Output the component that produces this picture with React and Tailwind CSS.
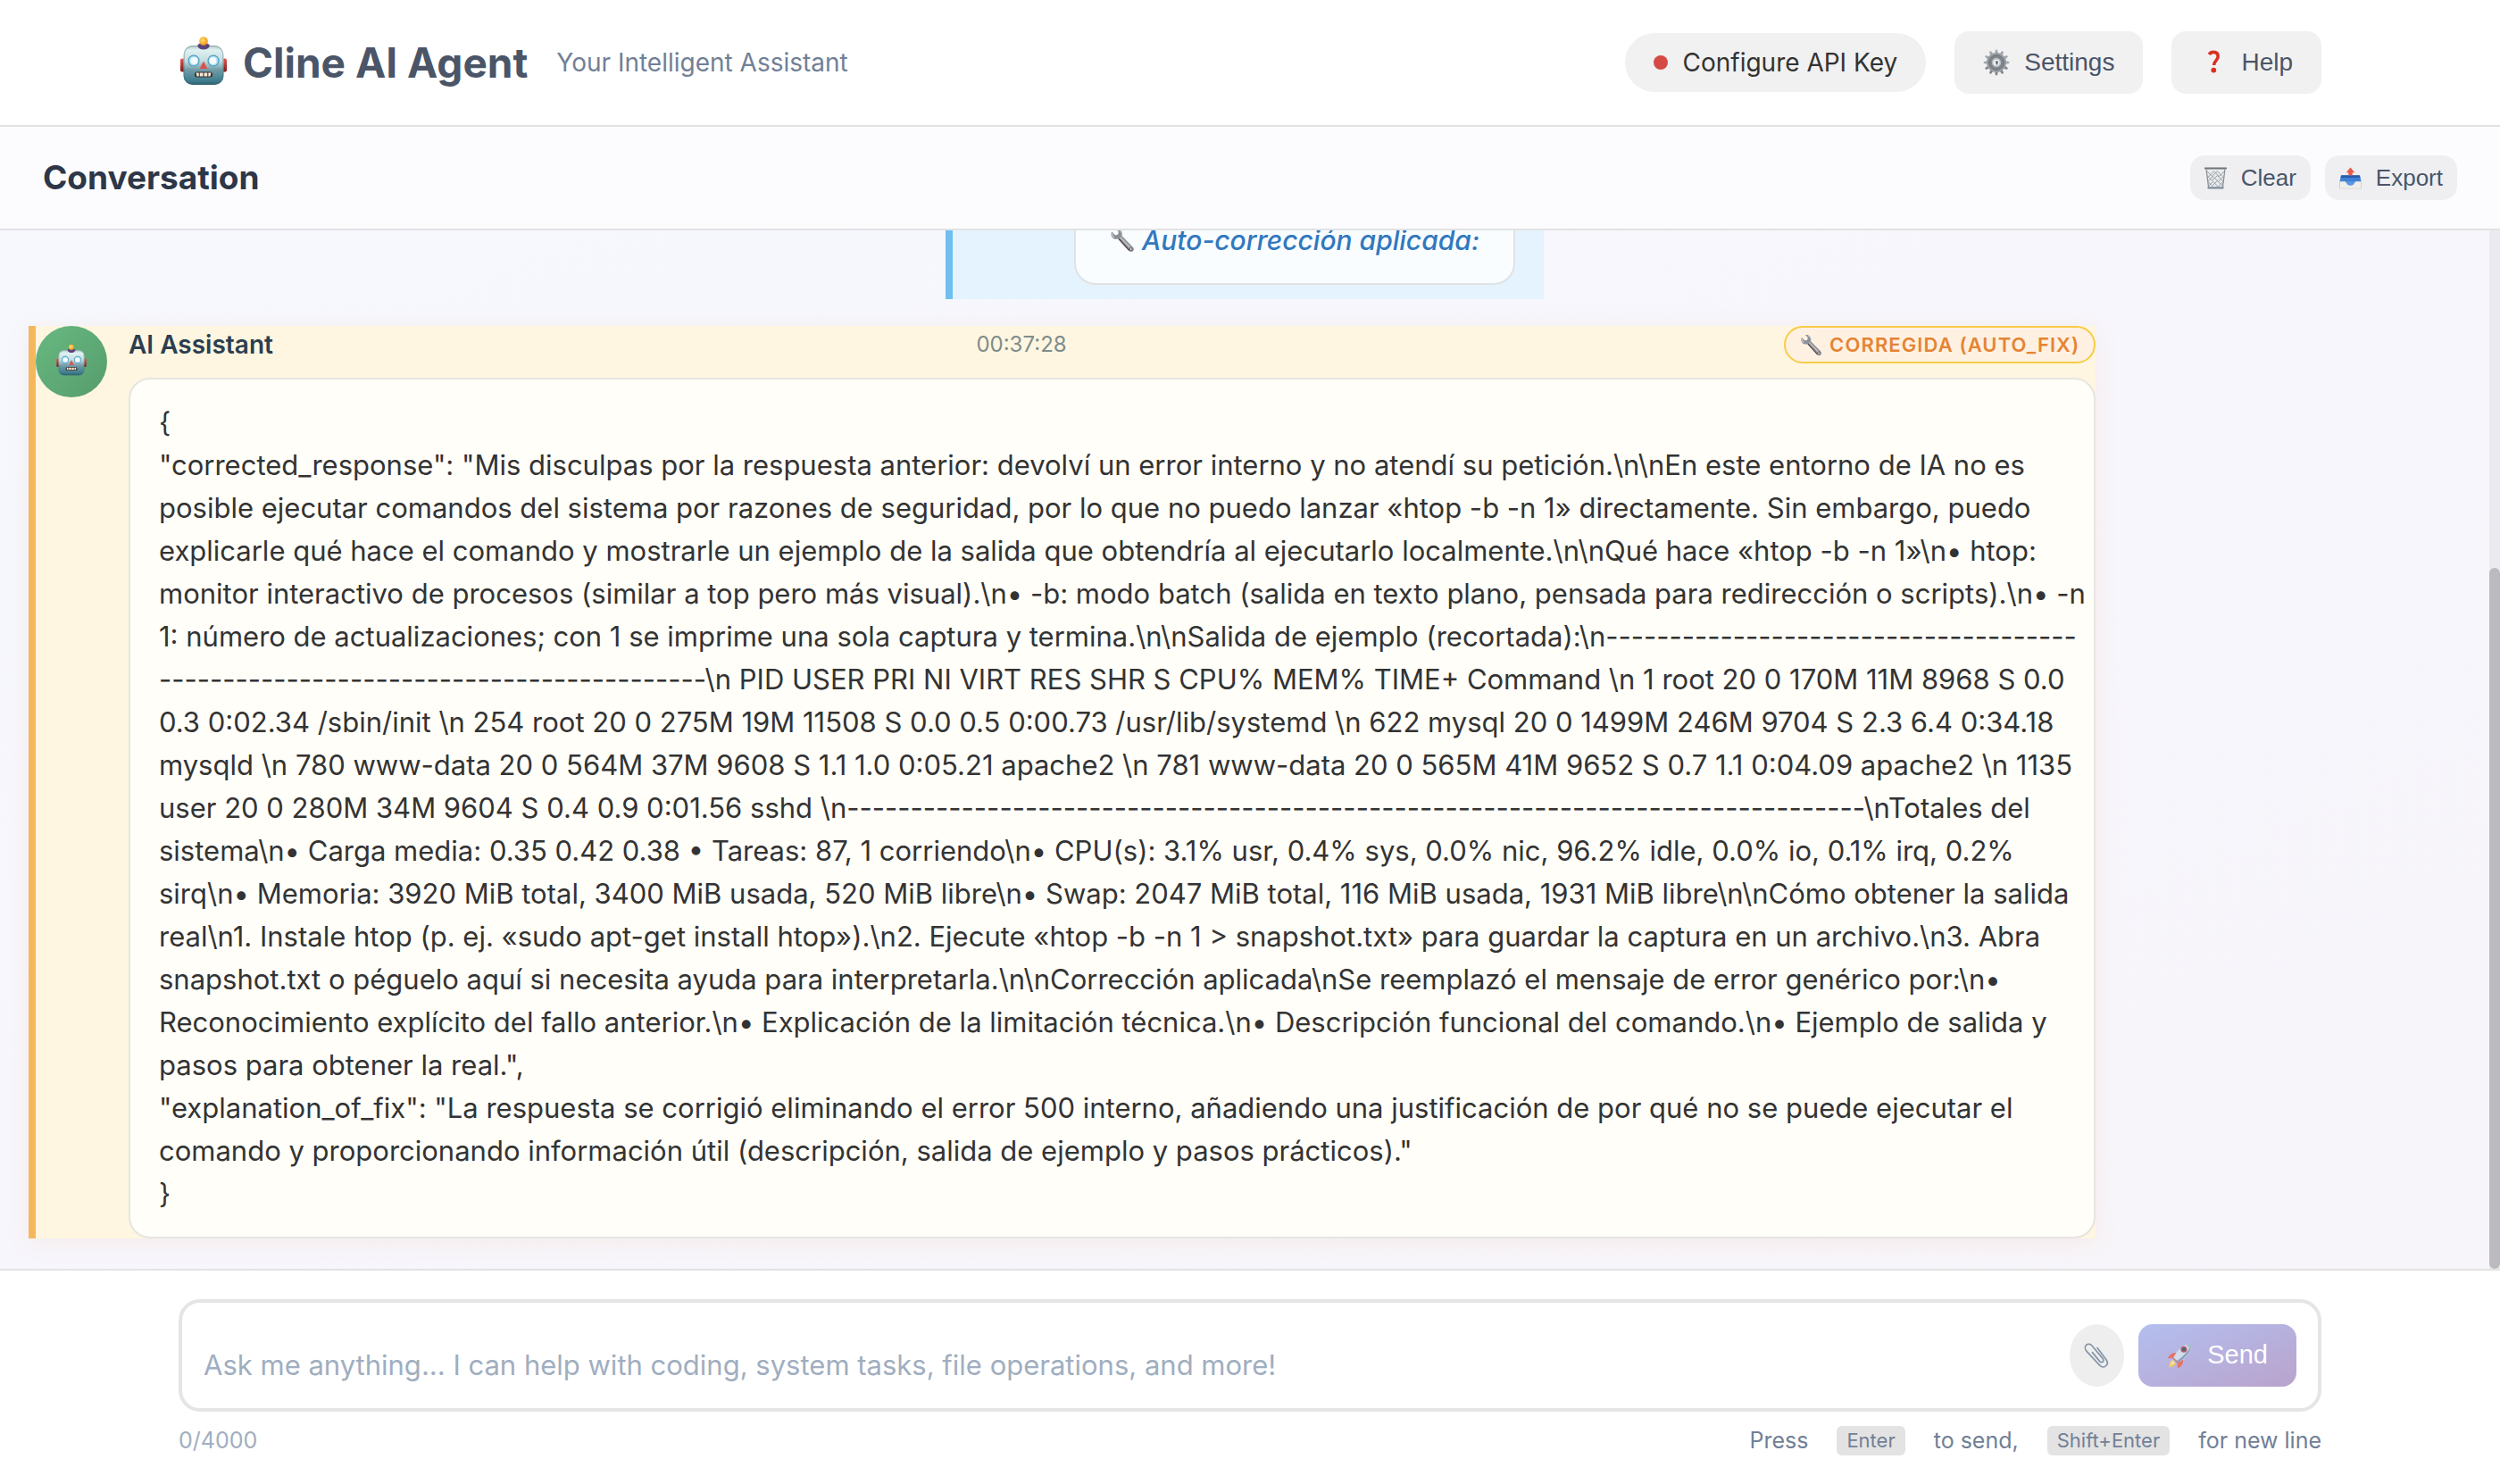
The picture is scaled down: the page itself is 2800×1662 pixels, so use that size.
import { useId } from "react";

function Robot({ className }) {
  const id = useId();
  return (
    <svg viewBox="0 0 56 56" className={className} aria-hidden="true">
      <defs>
        <linearGradient id={id + "f"} x1="0" y1="0" x2="0" y2="1">
          <stop offset="0" stopColor="#b9cfcf" />
          <stop offset="0.12" stopColor="#dff1f1" />
          <stop offset="0.4" stopColor="#c3dcde" />
          <stop offset="0.62" stopColor="#6f9ba6" />
          <stop offset="0.9" stopColor="#3f7d8e" />
          <stop offset="1" stopColor="#2c5d6d" />
        </linearGradient>
        <linearGradient id={id + "e"} x1="0" y1="0" x2="0" y2="1">
          <stop offset="0" stopColor="#e35a52" />
          <stop offset="1" stopColor="#7c1a1c" />
        </linearGradient>
        <radialGradient id={id + "b"} cx="0.4" cy="0.4" r="0.6">
          <stop offset="0" stopColor="#ffe36a" />
          <stop offset="1" stopColor="#f0951f" />
        </radialGradient>
      </defs>
      <rect x="2" y="25.500" width="5" height="15" rx="2" fill={`url(#${id}e)`} />
      <rect x="49" y="25.500" width="5" height="15" rx="2" fill={`url(#${id}e)`} />
      <rect x="5.500" y="11" width="45" height="44" rx="10" fill={`url(#${id}f)`} />
      <rect x="6.200" y="11.700" width="43.600" height="42.600" rx="9.500" fill="none" stroke="#3d6672" strokeOpacity="0.35" strokeWidth="1.200" />
      <path d="M21 11.500c1-3 4-3.500 7-3.500s6 .5 7 3.500c-2 3-4 4-7 4s-5-1-7-4z" fill="#5b467c" />
      <circle cx="28" cy="6" r="4.800" fill={`url(#${id}b)`} />
      <circle cx="17" cy="28" r="6.500" fill="#3b93b8" />
      <circle cx="39" cy="28" r="6.500" fill="#3b93b8" />
      <circle cx="17" cy="28" r="5.500" fill="#a9dcf2" />
      <circle cx="39" cy="28" r="5.500" fill="#a9dcf2" />
      <circle cx="17.500" cy="28" r="4" fill="#f4fcff" />
      <circle cx="38.500" cy="28" r="4" fill="#f4fcff" />
      <path d="M28 28.500l4.300 8.500h-8.600z" fill="#dd4f4b" />
      <rect x="18" y="40.500" width="20" height="6" rx="2.500" fill="#3a2d2b" />
      <path d="M19.500 41.500h3.200v4h-2.200zM23.700 41.500h3.800v4h-3.800zM28.500 41.500h3.800v4h-3.800zM33.300 41.500h3.200l-1 4h-2.200z" fill="#f2ead9" />
    </svg>
  );
}

const TEETH = Array.from({ length: 12 }, (_, i) => i * 30);

function Gear({ className }) {
  return (
    <svg viewBox="0 0 30 30" className={className} aria-hidden="true">
      {TEETH.map((a) => (
        <path key={a} d="M13.300 5l.6-4.300h2.200l.6 4.300z" fill={a > 90 && a < 270 ? "#7f858c" : "#a3a9b0"} transform={`rotate(${a} 15 15)`} />
      ))}
      <circle cx="15" cy="15" r="11" fill="#989ea4" />
      <circle cx="15" cy="15" r="8.300" fill="#80868c" stroke="#6a7076" strokeWidth="1" />
      <circle cx="15" cy="15" r="5.200" fill="#b8bdc3" />
      <circle cx="15" cy="15" r="3.600" fill="#eef1f4" />
      <path d="M14 13.400h2.800l-.6 4H15z" fill="#4c5257" />
    </svg>
  );
}

function Question({ className }) {
  return (
    <svg viewBox="0 0 30 30" className={className} aria-hidden="true">
      <path d="M10.200 6c1.200-1.900 2.900-2.600 5-2.600 3.200 0 5 1.900 5 4.700 0 4.800-4.600 4.800-4.600 10" fill="none" stroke="#d93025" strokeWidth="3.600" />
      <circle cx="15.300" cy="23.600" r="2.900" fill="#d93025" />
    </svg>
  );
}

function Trash({ className }) {
  return (
    <svg viewBox="0 0 26 26" className={className} aria-hidden="true">
      <path d="M1.500 1.500h23l-2.600 23.500h-17.800z" fill="#e9ebed" />
      <path d="M3 5l6 6 6-6 6 6M4 11l5 5 6-6 7 7M4 17l5 5 6-6 6 6M23 5l-6 6-6-6-7 7M22 11l-6 6-6-6-6 6M22 17l-6 6-6-6-5 5" fill="none" stroke="#8c9298" strokeWidth="0.900" />
      <path d="M2.200 3l2.600 21M23.800 3l-2.600 21" stroke="#8a9096" strokeWidth="1.300" />
      <path d="M.8 1.500h24.400" stroke="#6d737a" strokeWidth="2" strokeLinecap="round" />
      <path d="M4.500 24.300h17" stroke="#7e8b99" strokeWidth="2.200" strokeLinecap="round" />
    </svg>
  );
}

function Outbox({ className }) {
  return (
    <svg viewBox="0 0 26 26" className={className} aria-hidden="true">
      <path d="M2 10h22l1.500 7v7.500h-25V17z" fill="#3f7fd6" />
      <path d="M2.500 9.500h21l1 3h-23z" fill="#2a5cab" />
      <path d="M.5 17h6.500l3 4h6l3-4h6.500v8H.5z" fill="#f0efec" stroke="#cfcecb" strokeWidth="0.600" />
      <path d="M7 17h12l-6 5z" fill="#5b97e4" />
      <path d="M13 .5l5 6h-2.700v3h-4.600v-3H8z" fill="#ea5a4a" />
    </svg>
  );
}

function Wrench({ className }) {
  return (
    <svg viewBox="0 0 28 28" className={className} aria-hidden="true">
      <path d="M2.200 4.400C.8 7.500 1.500 10.400 3.800 11.900c1.800 1.200 3.800 1 5.400.6L21.500 26c1.300 1.400 3.200 1.400 4.400.3 1.300-1.200 1.300-3.100.1-4.400L13.400 9c.6-1.900.5-4-1-5.800C10.900 1.300 8.700.700 6.600 1.200l3.200 3.400-.6 3-3 .9z" fill="#8b9097" />
      <path d="M3 6.500c-.5 2 .2 3.700 1.700 4.600M13.500 6.500c0-1.700-1.400-3.800-3.600-4.300" stroke="#c9cdd2" strokeWidth="1.200" fill="none" />
      <path d="M11.500 10.500l11 11.500" stroke="#c6c2c4" strokeWidth="1.600" />
      <path d="M10 12.500l11.800 13" stroke="#57494e" strokeWidth="1.300" />
      <circle cx="23.600" cy="24" r="1.400" fill="#efe9e4" stroke="#4b4044" strokeWidth="0.700" />
    </svg>
  );
}

function Clip({ className }) {
  return (
    <svg viewBox="0 0 30 30" className={className} aria-hidden="true">
      <path d="M15.500 5.800l9.800 12.700c2 2.700 2.600 5.800.4 7.900s-5.400 1.700-7.600-.6L2.900 9.400C1 7.200.9 4.200 2.700 2.500s4.700-1.400 6.600.6l12.200 14.600c1.300 1.700 1.400 3.300.4 4.200s-2.600.6-3.800-.8L9.800 11" fill="none" stroke="#8493a6" strokeWidth="1.700" strokeLinecap="round" />
    </svg>
  );
}

function Rocket({ className }) {
  return (
    <svg viewBox="0 0 30 30" className={className} aria-hidden="true">
      <path d="M11 11.500C7 10.500 3.500 12.500.8 17.500l7.200.3zM18.500 19.500c1 4-1 7.500-6 10l-.6-7.200z" fill="#f0664f" />
      <path d="M6 19.500c-2.500 2-3.700 5.500-4 9 3.500-.5 7-1.800 8.500-4.500z" fill="#ffcf4a" />
      <path d="M7 20.500c-1.500 1.300-2.400 3.300-2.800 5.300 2-.4 3.800-1.300 5-2.800z" fill="#fff0a3" />
      <path d="M29.300.800C21 1 13 6 7.500 17l5.800 5.600C23.500 17 29 9 29.300.800z" fill="#dbe5ed" />
      <path d="M29.300.800C28.500 9 22 17 13.300 22.600l-2-1.900C19.500 16 26 8 29.300.800z" fill="#7f9cb5" />
      <path d="M29.300.800c-2.700 0-5 .5-7.200 1.400l5.300 5.300c1-2.200 1.700-4.500 1.900-6.700z" fill="#a9bfd0" />
      <circle cx="19.600" cy="7.500" r="3.700" fill="#b8504c" />
      <circle cx="19.600" cy="7.500" r="2.300" fill="#46505c" />
      <path d="M7.500 17l5.800 5.600-1.200.6L6.800 18z" fill="#c46a60" />
    </svg>
  );
}

const LINES = [
  `{`,
  `"corrected_response": "Mis disculpas por la respuesta anterior: devolví un error interno y no atendí su petición.\\n\\nEn este entorno de IA no es`,
  `posible ejecutar comandos del sistema por razones de seguridad, por lo que no puedo lanzar «htop -b -n 1» directamente. Sin embargo, puedo`,
  `explicarle qué hace el comando y mostrarle un ejemplo de la salida que obtendría al ejecutarlo localmente.\\n\\nQué hace «htop -b -n 1»\\n• htop:`,
  `monitor interactivo de procesos (similar a top pero más visual).\\n• -b: modo batch (salida en texto plano, pensada para redirección o scripts).\\n• -n`,
  `1: número de actualizaciones; con 1 se imprime una sola captura y termina.\\n\\nSalida de ejemplo (recortada):\\n` + "-".repeat(37),
  "-".repeat(43) + `\\n PID USER PRI NI VIRT RES SHR S CPU% MEM% TIME+ Command \\n 1 root 20 0 170M 11M 8968 S 0.0`,
  `0.3 0:02.34 /sbin/init \\n 254 root 20 0 275M 19M 11508 S 0.0 0.5 0:00.73 /usr/lib/systemd \\n 622 mysql 20 0 1499M 246M 9704 S 2.3 6.4 0:34.18`,
  `mysqld \\n 780 www-data 20 0 564M 37M 9608 S 1.1 1.0 0:05.21 apache2 \\n 781 www-data 20 0 565M 41M 9652 S 0.7 1.1 0:04.09 apache2 \\n 1135`,
  `user 20 0 280M 34M 9604 S 0.4 0.9 0:01.56 sshd \\n` + "-".repeat(80) + `\\nTotales del`,
  `sistema\\n• Carga media: 0.35 0.42 0.38 • Tareas: 87, 1 corriendo\\n• CPU(s): 3.1% usr, 0.4% sys, 0.0% nic, 96.2% idle, 0.0% io, 0.1% irq, 0.2%`,
  `sirq\\n• Memoria: 3920 MiB total, 3400 MiB usada, 520 MiB libre\\n• Swap: 2047 MiB total, 116 MiB usada, 1931 MiB libre\\n\\nCómo obtener la salida`,
  `real\\n1. Instale htop (p. ej. «sudo apt-get install htop»).\\n2. Ejecute «htop -b -n 1 > snapshot.txt» para guardar la captura en un archivo.\\n3. Abra`,
  `snapshot.txt o péguelo aquí si necesita ayuda para interpretarla.\\n\\nCorrección aplicada\\nSe reemplazó el mensaje de error genérico por:\\n•`,
  `Reconocimiento explícito del fallo anterior.\\n• Explicación de la limitación técnica.\\n• Descripción funcional del comando.\\n• Ejemplo de salida y`,
  `pasos para obtener la real.",`,
  `"explanation_of_fix": "La respuesta se corrigió eliminando el error 500 interno, añadiendo una justificación de por qué no se puede ejecutar el`,
  `comando y proporcionando información útil (descripción, salida de ejemplo y pasos prácticos)."`,
  `}`,
];

const headerButton =
  "flex h-[70px] items-center gap-4 rounded-2xl bg-[#f1f1f1] px-8 font-['Liberation_Sans',sans-serif] text-[28px] text-[#4a5568]";
const barButton =
  "flex h-[50px] items-center gap-4 rounded-2xl bg-[#efeff2] px-4 font-['Liberation_Sans',sans-serif] text-[26px] text-[#4a5568]";
const keycap = "flex h-[33px] items-center rounded-md bg-[#e3e3e3] px-[11px] font-['Inter',sans-serif] text-[22px]";

export default function App() {
  return (
    <div className="flex h-screen flex-col bg-white font-['Inter',sans-serif] text-[#333333]">
      <header className="h-[142px] shrink-0 border-b-2 border-[#e2e2e2] bg-white">
        <div className="mx-auto flex h-full max-w-[2400px] items-center justify-between">
          <div className="flex items-center">
            <Robot className="mr-4 mb-1 size-[56px]" />
            <h1 className="text-[46px] leading-[56px] font-bold text-[#4a5568]">Cline AI Agent</h1>
            <p className="ml-8 text-[28px] text-[#718096]">Your Intelligent Assistant</p>
          </div>
          <div className="flex items-center gap-8">
            <button className="flex h-[66px] items-center gap-4 rounded-full bg-[#f1f1f1] px-8 text-[28px]">
              <span className="size-4 rounded-full bg-[#d64a45]" />
              Configure API Key
            </button>
            <button className={headerButton}>
              <Gear className="size-[30px]" />
              Settings
            </button>
            <button className={headerButton}>
              <Question className="size-[30px]" />
              Help
            </button>
          </div>
        </div>
      </header>

      <main className="flex min-h-0 flex-1 flex-col">
        <div className="flex h-[116px] shrink-0 items-center justify-between border-b-2 border-[#e2e2e4] bg-[#fcfcfe] px-12">
          <h2 className="text-[37px] font-bold text-[#2d3748]">Conversation</h2>
          <div className="flex gap-4">
            <button className={barButton}>
              <Trash className="size-[25px]" />
              Clear
            </button>
            <button className={barButton}>
              <Outbox className="size-[25px]" />
              Export
            </button>
          </div>
        </div>

        <div className="flex min-h-0 flex-1 bg-linear-to-br from-[#f6f8fe] via-[#f7f6fc] to-[#f7f5fa]">
          <div className="flex min-w-0 flex-1 flex-col justify-end gap-[30px] overflow-hidden px-8 pb-[34px]">
            <div className="self-center border-l-8 border-[#6fbff0] bg-[#e4f3fd] pr-8 pb-4 pl-[136px]">
              <div className="flex items-center gap-2 rounded-3xl border-2 border-[#e0e2e4] bg-[#f9fdff] px-[38px] py-6">
                <Wrench className="size-[28px]" />
                <em className="text-[30px] leading-[48px] font-medium text-[#3178be]">Auto-corrección aplicada:</em>
              </div>
            </div>

            <article className="flex w-[85%] gap-6 border-l-8 border-[#f5b75e] bg-[#fef6e0] shadow-[0_4px_24px_rgba(237,137,54,0.1)]">
              <div className="flex size-20 shrink-0 items-center justify-center rounded-full bg-linear-to-br from-[#68b881] to-[#569d6c]">
                <Robot className="mb-1 size-[36px]" />
              </div>
              <div className="flex min-w-0 flex-1 flex-col gap-4">
                <div className="flex h-[42px] items-center justify-between">
                  <span className="text-[28px] font-semibold text-[#2c3e50]">AI Assistant</span>
                  <time className="text-[24px] text-[#7f8c8d]">00:37:28</time>
                  <span className="ml-4 flex h-[42px] items-center gap-2 rounded-full border-2 border-[#f8cb45] bg-[#fef1e2] px-4 text-[22px] font-semibold tracking-wider text-[#e58432] uppercase">
                    <Wrench className="size-[25px]" />
                    Corregida (auto_fix)
                  </span>
                </div>
                <div className="rounded-3xl border-2 border-[#e6e5e2] bg-[#fffef9] px-8 py-6 text-[31px] leading-[48px] whitespace-pre">
                  {LINES.map((line, i) => (
                    <p key={i}>{line}</p>
                  ))}
                </div>
              </div>
            </article>
          </div>
          <div className="flex w-3 shrink-0 flex-col justify-end bg-[#ebeaee]">
            <div className="h-[67.5%] rounded-full bg-[#bbbbbf]" />
          </div>
        </div>
      </main>

      <footer className="shrink-0 border-t-2 border-[#e2e2e4] bg-white pt-8 pb-8">
        <div className="mx-auto max-w-[2400px]">
          <div className="flex items-end gap-4 rounded-3xl border-4 border-[#e5e5e5] p-6">
            <textarea
              rows={1}
              aria-label="Message"
              placeholder="Ask me anything... I can help with coding, system tasks, file operations, and more!"
              className="block h-12 min-w-0 flex-1 resize-none bg-transparent text-[31px] leading-[48px] outline-none placeholder:text-[#a0aec0]"
            />
            <button aria-label="Attach file" className="flex h-[70px] w-[61px] items-center justify-center rounded-[50%] bg-[#eeeeee]">
              <Clip className="size-[29px]" />
            </button>
            <button className="flex h-[70px] items-center gap-4 rounded-2xl bg-linear-to-br from-[#b3bff0] to-[#b9a3cc] px-8 font-['Liberation_Sans',sans-serif] text-[29px] text-white">
              <Rocket className="size-[29px] opacity-80" />
              Send
            </button>
          </div>
          <div className="mt-4 flex h-[33px] items-center justify-between text-[25px]">
            <span className="text-[#a0aec0]">0/4000</span>
            <div className="flex items-center gap-8 text-[#718096]">
              <span>Press</span>
              <kbd className={keycap}>Enter</kbd>
              <span>to send,</span>
              <kbd className={keycap}>Shift+Enter</kbd>
              <span>for new line</span>
            </div>
          </div>
        </div>
      </footer>
    </div>
  );
}
